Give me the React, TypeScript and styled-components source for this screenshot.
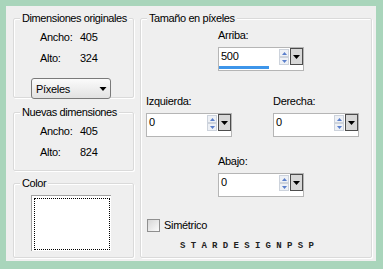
import React from "react";
import styled, { createGlobalStyle } from "styled-components";

const GlobalStyle = createGlobalStyle`
	body {
		margin: 0;
		font-family: Tahoma, "Liberation Sans", Arial, sans-serif;
		font-size: 11px;
		letter-spacing: -0.3px;
		color: #000;
	}
`;

const Frame = styled.div`
	width: 383px;
	height: 269px;
	box-sizing: border-box;
	background: #a9d5bb;
	padding: 6px 7px 8px 6px;
`;

const Panel = styled.div`
	height: 100%;
	box-sizing: border-box;
	background: #efefef;
	display: flex;
	gap: 6px;
	padding: 6px 4px 3px 7px;
`;

const LeftCol = styled.div`
	width: 121px;
	display: flex;
	flex-direction: column;
`;

const Group = styled.fieldset<{ $h: number; $mt?: number }>`
	margin: ${({ $mt }) => $mt || 0}px 0 0 0;
	padding: 0;
	min-width: 0;
	height: ${({ $h }) => $h}px;
	box-sizing: border-box;
	border: 1px solid #dadada;
	box-shadow: inset 1px 1px 0 #fff, 1px 1px 0 #fff;
	border-radius: 2px;
`;

const RightGroup = styled(Group)`
	width: 232px;
`;

const Legend = styled.legend`
	margin-left: 6px;
	padding: 0 2px;
	line-height: 13px;
	font-size: 11px;
	letter-spacing: -0.4px;
	white-space: nowrap;
	background: #efefef;
	position: relative;
	z-index: 1;
`;

const Content = styled.div<{ $pt: number }>`
	display: flex;
	flex-direction: column;
	padding: ${({ $pt }) => $pt}px 0 0 17px;
`;

const InfoGrid = styled.div`
	display: grid;
	grid-template-columns: 40px auto;
	row-gap: 8px;
	padding-left: 9px;
	line-height: 13px;
`;

const Select = styled.div`
	margin-top: 13px;
	width: 80px;
	height: 21px;
	box-sizing: border-box;
	border: 1px solid #7a7a7a;
	border-radius: 3px;
	background: linear-gradient(#fbfbfb, #e2e2e2);
	display: flex;
	align-items: center;
	justify-content: space-between;
	padding: 0 3px 0 4px;
	font-size: 11px;
`;

const Swatch = styled.div`
	width: 80px;
	height: 56px;
	box-sizing: border-box;
	background: #fff;
	border-top: 1px solid #a0a0a0;
	border-left: 1px solid #a0a0a0;
	padding: 2px 1px 1px 2px;
`;

const FocusRect = styled.div`
	height: 100%;
	box-sizing: border-box;
	border: 1px dotted #000;
`;

const RightContent = styled.div`
	display: flex;
	flex-direction: column;
	padding-top: 4px;
`;

const FieldBlock = styled.div<{ $ml: number; $mt?: number }>`
	margin: ${({ $mt }) => $mt || 0}px 0 0 ${({ $ml }) => $ml}px;
	display: flex;
	flex-direction: column;
	gap: 5px;
`;

const FieldRow = styled.div`
	display: flex;
	gap: 41px;
	margin: 24px 0 0 5px;
`;

const Label = styled.span`
	line-height: 13px;
`;

const SpinBox = styled.div`
	width: 86px;
	height: 24px;
	box-sizing: border-box;
	border: 1px solid #b5b5b5;
	background: #fff;
	display: flex;
	flex-direction: column;
`;

const SpinTop = styled.div`
	height: 17px;
	display: flex;
`;

const SpinText = styled.div`
	flex: 1;
	padding: 2px 0 0 2px;
	line-height: 13px;
`;

const SpinArrows = styled.div`
	width: 10px;
	display: flex;
	flex-direction: column;
	padding-top: 1px;
	margin-right: 1px;
`;

const ArrowBtn = styled.div`
	height: 8px;
	box-sizing: border-box;
	border: 1px solid #cdd3dc;
	background: #eef1f6;
	display: flex;
	align-items: center;
	justify-content: center;
`;

const DropBtn = styled.div`
	width: 13px;
	height: 17px;
	box-sizing: border-box;
	border: 1px solid #4c4c4c;
	background: #d8d8d8;
	display: flex;
	align-items: center;
	justify-content: center;
`;

const Progress = styled.div`
	height: 4px;
	padding: 1px 0 0 0;
`;

const ProgressFill = styled.div`
	height: 3px;
	background: #3d95ea;
`;

const CheckRow = styled.label`
	margin: 22px 0 0 6px;
	display: flex;
	align-items: center;
	gap: 4px;
	line-height: 13px;
`;

const CheckBox = styled.span`
	width: 13px;
	height: 13px;
	box-sizing: border-box;
	border: 1px solid #8f8f8f;
	background: linear-gradient(135deg, #d6d6d6, #fbfbfb);
`;

const Watermark = styled.div`
	margin: 10px 0 0 39px;
	font-family: "Liberation Mono", monospace;
	font-weight: bold;
	font-size: 9px;
	line-height: 9px;
	letter-spacing: 5.3px;
	color: #222;
`;

const DownTri = ({ w = 7 }: { w?: number }) => (
	<svg width={w} height={4} viewBox="0 0 7 4">
		<polygon points="0,0 7,0 3.5,4" fill="#000" />
	</svg>
);

const SmallTri = ({ up }: { up?: boolean }) => (
	<svg width={5} height={3} viewBox="0 0 5 3">
		<polygon points={up ? "0,3 5,3 2.5,0" : "0,0 5,0 2.5,3"} fill="#5a7fcb" />
	</svg>
);

const Spinner = ({ value, fill }: { value: string; fill?: number }) => (
	<SpinBox>
		<SpinTop>
			<SpinText>{value}</SpinText>
			<SpinArrows>
				<ArrowBtn>
					<SmallTri up />
				</ArrowBtn>
				<ArrowBtn>
					<SmallTri />
				</ArrowBtn>
			</SpinArrows>
			<DropBtn>
				<DownTri />
			</DropBtn>
		</SpinTop>
		<Progress>{fill ? <ProgressFill style={{ width: `${fill}%` }} /> : null}</Progress>
	</SpinBox>
);

const App = () => (
	<>
		<GlobalStyle />
		<Frame>
			<Panel>
				<LeftCol>
					<Group $h={86}>
						<Legend>Dimensiones originales</Legend>
						<Content $pt={6}>
							<InfoGrid>
								<span>Ancho:</span>
								<span>405</span>
								<span>Alto:</span>
								<span>324</span>
							</InfoGrid>
							<Select>
								<span>Píxeles</span>
								<DownTri w={8} />
							</Select>
						</Content>
					</Group>
					<Group $h={65} $mt={8}>
						<Legend>Nuevas dimensiones</Legend>
						<Content $pt={6}>
							<InfoGrid>
								<span>Ancho:</span>
								<span>405</span>
								<span>Alto:</span>
								<span>824</span>
							</InfoGrid>
						</Content>
					</Group>
					<Group $h={81} $mt={6}>
						<Legend>Color</Legend>
						<Content $pt={5}>
							<Swatch>
								<FocusRect />
							</Swatch>
						</Content>
					</Group>
				</LeftCol>
				<RightGroup $h={246}>
					<Legend>Tamaño en píxeles</Legend>
					<RightContent>
						<FieldBlock $ml={77}>
							<Label>Arriba:</Label>
							<Spinner value="500" fill={60} />
						</FieldBlock>
						<FieldRow>
							<FieldBlock $ml={0}>
								<Label>Izquierda:</Label>
								<Spinner value="0" />
							</FieldBlock>
							<FieldBlock $ml={0}>
								<Label>Derecha:</Label>
								<Spinner value="0" />
							</FieldBlock>
						</FieldRow>
						<FieldBlock $ml={77} $mt={18}>
							<Label>Abajo:</Label>
							<Spinner value="0" />
						</FieldBlock>
						<CheckRow>
							<CheckBox />
							<span>Simétrico</span>
						</CheckRow>
						<Watermark>STARDESIGNPSP</Watermark>
					</RightContent>
				</RightGroup>
			</Panel>
		</Frame>
	</>
);

export default App;
